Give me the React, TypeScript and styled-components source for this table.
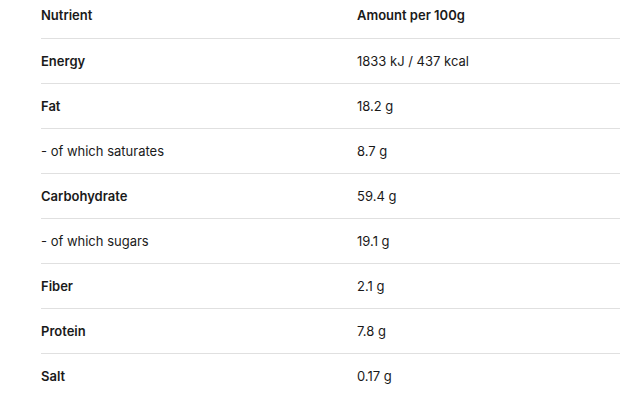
import React from 'react';
import styled, { createGlobalStyle } from 'styled-components';

const GlobalStyle = createGlobalStyle`
  html, body {
    margin: 0;
    padding: 0;
    background: #ffffff;
  }
  body {
    font-family: Inter, Roboto, "Liberation Sans", Arial, sans-serif;
    color: #1a1a1a;
  }
`;

const Page = styled.div`
  padding-left: 41px;
  width: 620px;
  box-sizing: border-box;
  overflow: hidden;
`;

const Table = styled.table`
  width: 100%;
  border-collapse: collapse;
  font-size: 13px;
`;

const HeadCell = styled.th`
  text-align: left;
  font-weight: 600;
  padding: 7px 0 15px;
  border-bottom: 1px solid #e0e0e0;
  line-height: 16px;

  &:first-child {
    width: 316px;
  }
`;

const Cell = styled.td<{ $strong?: boolean }>`
  height: 44px;
  padding: 0;
  line-height: 16px;
  font-weight: ${props => (props.$strong ? 600 : 400)};
  vertical-align: middle;
`;

const Row = styled.tr<{ $last?: boolean }>`
  border-bottom: 1px solid ${props => (props.$last ? 'transparent' : '#e0e0e0')};
`;

const rows = [
  { name: 'Energy', value: '1833 kJ / 437 kcal', strong: true },
  { name: 'Fat', value: '18.2 g', strong: true },
  { name: '- of which saturates', value: '8.7 g', strong: false },
  { name: 'Carbohydrate', value: '59.4 g', strong: true },
  { name: '- of which sugars', value: '19.1 g', strong: false },
  { name: 'Fiber', value: '2.1 g', strong: true },
  { name: 'Protein', value: '7.8 g', strong: true },
  { name: 'Salt', value: '0.17 g', strong: true },
];

const App: React.FC = () => {
  return (
    <>
      <GlobalStyle />
      <Page>
        <Table>
          <thead>
            <tr>
              <HeadCell>Nutrient</HeadCell>
              <HeadCell>Amount per 100g</HeadCell>
            </tr>
          </thead>
          <tbody>
            {rows.map((r, i) => (
              <Row key={r.name} $last={i === rows.length - 1}>
                <Cell $strong={r.strong}>{r.name}</Cell>
                <Cell>{r.value}</Cell>
              </Row>
            ))}
          </tbody>
        </Table>
      </Page>
    </>
  );
};

export default App;
